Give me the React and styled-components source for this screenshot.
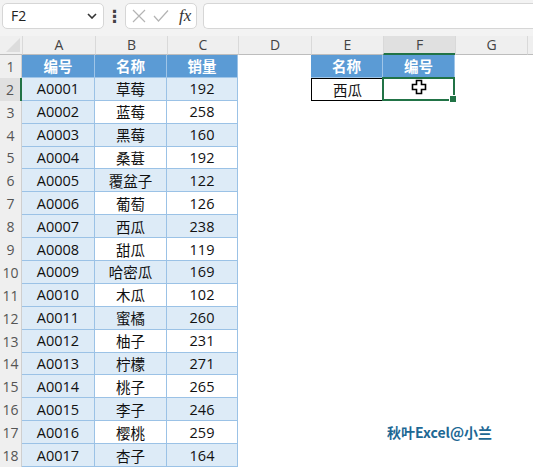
import React from "react";
import styled, { createGlobalStyle, css } from "styled-components";

const GlobalStyle = createGlobalStyle`
  html, body {
    margin: 0;
    padding: 0;
    background: #ffffff;
  }
  body {
    font-family: "Open Sans", "Noto Sans CJK SC", sans-serif;
  }
`;

const rows = [
  ["A0001", "草莓", 192],
  ["A0002", "蓝莓", 258],
  ["A0003", "黑莓", 160],
  ["A0004", "桑葚", 192],
  ["A0005", "覆盆子", 122],
  ["A0006", "葡萄", 126],
  ["A0007", "西瓜", 238],
  ["A0008", "甜瓜", 119],
  ["A0009", "哈密瓜", 169],
  ["A0010", "木瓜", 102],
  ["A0011", "蜜橘", 260],
  ["A0012", "柚子", 231],
  ["A0013", "柠檬", 271],
  ["A0014", "桃子", 265],
  ["A0015", "李子", 246],
  ["A0016", "樱桃", 259],
  ["A0017", "杏子", 164],
];

const letters = ["A", "B", "C", "D", "E", "F", "G", ""];

export default function App() {
  return (
    <Page>
      <GlobalStyle />
      <FormulaBar>
        <NameBox>
          <span>F2</span>
          <Chevron viewBox="0 0 10 6">
            <path d="M1 1 L5 5 L9 1" fill="none" stroke="#333" strokeWidth="1.6" />
          </Chevron>
        </NameBox>
        <Dots>⋮</Dots>
        <ActionBox>
          <svg width="14" height="14" viewBox="0 0 14 14">
            <path d="M1 1 L13 13 M13 1 L1 13" stroke="#b4b4b4" strokeWidth="1.2" />
          </svg>
          <svg width="16" height="14" viewBox="0 0 16 14">
            <path d="M1 7 L5.5 12 L15 1.5" fill="none" stroke="#b4b4b4" strokeWidth="1.2" />
          </svg>
          <Fx>fx</Fx>
        </ActionBox>
        <FormulaInput />
      </FormulaBar>

      <Sheet>
        <Corner>
          <svg width="14" height="14" viewBox="0 0 14 14">
            <path d="M14 0 L14 14 L0 14 Z" fill="#dcdcdc" />
          </svg>
        </Corner>
        {letters.map((l, i) => (
          <ColHead key={"h" + i} $active={l === "F"}>
            {l}
          </ColHead>
        ))}

        <RowHead>1</RowHead>
        <Cell $kind="head">编号</Cell>
        <Cell $kind="head">名称</Cell>
        <Cell $kind="head" $last>销量</Cell>
        <Cell />
        <Cell $kind="head">名称</Cell>
        <Cell $kind="head">编号</Cell>
        <Cell />
        <Cell />

        {rows.map((r, i) => {
          const n = i + 2;
          const band = i % 2 === 0;
          return (
            <React.Fragment key={r[0]}>
              <RowHead $active={n === 2}>{n}</RowHead>
              <Cell $kind="band">{r[0]}</Cell>
              <Cell $kind={band ? "band" : "plain"}>{r[1]}</Cell>
              <Cell $kind={band ? "band" : "plain"} $last>
                {r[2]}
              </Cell>
              <Cell />
              {n === 2 ? (
                <>
                  <Cell $kind="boxed">西瓜</Cell>
                  <Cell $kind="selected">
                    <CrossCursor viewBox="0 0 16 16">
                      <path
                        d="M5.5 1.5 H10.5 V5.5 H14.5 V10.5 H10.5 V14.5 H5.5 V10.5 H1.5 V5.5 H5.5 Z"
                        fill="#fff"
                        stroke="#000"
                        strokeWidth="1.6"
                      />
                    </CrossCursor>
                    <FillHandle />
                  </Cell>
                </>
              ) : (
                <>
                  <Cell />
                  <Cell />
                </>
              )}
              <Cell />
              <Cell />
            </React.Fragment>
          );
        })}
        <Watermark>秋叶Excel@小兰</Watermark>
      </Sheet>
    </Page>
  );
}

const Page = styled.div`
  width: 533px;
  height: 467px;
  overflow: hidden;
  display: flex;
  flex-direction: column;
  background: #fff;
`;

const FormulaBar = styled.div`
  height: 37px;
  box-sizing: border-box;
  padding: 3px 0 7px 2px;
  display: flex;
  align-items: stretch;
  background: #f3f3f3;
`;

const boxBase = css`
  box-sizing: border-box;
  background: #fff;
  border: 1px solid #d6d6d6;
  border-radius: 5px;
`;

const NameBox = styled.div`
  ${boxBase};
  width: 102px;
  display: flex;
  align-items: center;
  justify-content: space-between;
  padding: 0 6px 0 8px;
  font-family: "Open Sans", sans-serif;
  font-size: 14px;
  color: #222;
`;

const Chevron = styled.svg`
  width: 10px;
  height: 6px;
`;

const Dots = styled.div`
  width: 21px;
  display: flex;
  align-items: center;
  justify-content: center;
  font-size: 17px;
  font-weight: bold;
  color: #444;
  font-family: "DejaVu Sans", sans-serif;
`;

const ActionBox = styled.div`
  ${boxBase};
  width: 72px;
  display: flex;
  align-items: center;
  gap: 7px;
  padding: 0 0 0 6px;
`;

const Fx = styled.span`
  font-family: "Liberation Serif", serif;
  font-style: italic;
  font-size: 17px;
  color: #333;
  margin-left: 3px;
`;

const FormulaInput = styled.div`
  ${boxBase};
  flex: 1;
  margin-left: 6px;
  border-right: none;
  border-radius: 5px 0 0 5px;
`;

const Sheet = styled.div`
  position: relative;
  display: grid;
  grid-template-columns: 22px 73px 72px 71px 73px 72px 72px 72px 1fr;
  grid-template-rows: 19px repeat(18, 22.9px);
  font-family: "Open Sans", "Noto Sans CJK SC", sans-serif;
`;

const Corner = styled.div`
  background: #efefef;
  border-bottom: 1px solid #bdbdbd;
  display: flex;
  align-items: flex-end;
  justify-content: flex-end;
  padding: 0 2px 2px 0;
  box-sizing: border-box;
`;

const ColHead = styled.div`
  box-sizing: border-box;
  background: ${(p) => (p.$active ? "#e0e0e0" : "#efefef")};
  border-bottom: ${(p) => (p.$active ? "2px solid #217346" : "1px solid #bdbdbd")};
  border-left: 1px solid #d9d9d9;
  display: flex;
  align-items: center;
  justify-content: center;
  font-size: 14px;
  color: #444;
`;

const RowHead = styled.div`
  box-sizing: border-box;
  background: ${(p) => (p.$active ? "#e0e0e0" : "#efefef")};
  border-right: ${(p) => (p.$active ? "2px solid #217346" : "1px solid #cfcfcf")};
  display: flex;
  align-items: center;
  justify-content: center;
  font-size: 14px;
  color: #555;
`;

const kinds = {
  head: css`
    background: #5b9bd5;
    color: #fff;
    font-weight: bold;
    border-right: 1px solid #9fc5e8;
    border-bottom: 1px solid #9fc5e8;
  `,
  band: css`
    background: #ddebf7;
    border-right: 1px solid #9bc2e6;
    border-bottom: 1px solid #9bc2e6;
  `,
  plain: css`
    background: #fff;
    border-right: 1px solid #9bc2e6;
    border-bottom: 1px solid #9bc2e6;
  `,
  boxed: css`
    border: 1px solid #000;
    border-right: none;
  `,
  selected: css`
    border: 2px solid #217346;
    margin-left: -1px;
    margin-top: -1px;
  `,
};

const Cell = styled.div`
  position: relative;
  box-sizing: border-box;
  display: flex;
  align-items: center;
  justify-content: center;
  font-size: 14.5px;
  color: #111;
  white-space: nowrap;
  ${(p) => kinds[p.$kind]};
  ${(p) => p.$last && "border-right-color: #9bc2e6;"}
`;

const CrossCursor = styled.svg`
  position: absolute;
  left: 27px;
  top: 0px;
  width: 16px;
  height: 16px;
`;

const FillHandle = styled.div`
  position: absolute;
  right: -4px;
  bottom: -4px;
  width: 6px;
  height: 6px;
  background: #217346;
  border: 1px solid #fff;
`;

const Watermark = styled.div`
  position: absolute;
  left: 387px;
  top: 386px;
  font-family: "Noto Sans CJK SC", sans-serif;
  font-weight: bold;
  font-size: 14px;
  color: #1d6894;
`;
